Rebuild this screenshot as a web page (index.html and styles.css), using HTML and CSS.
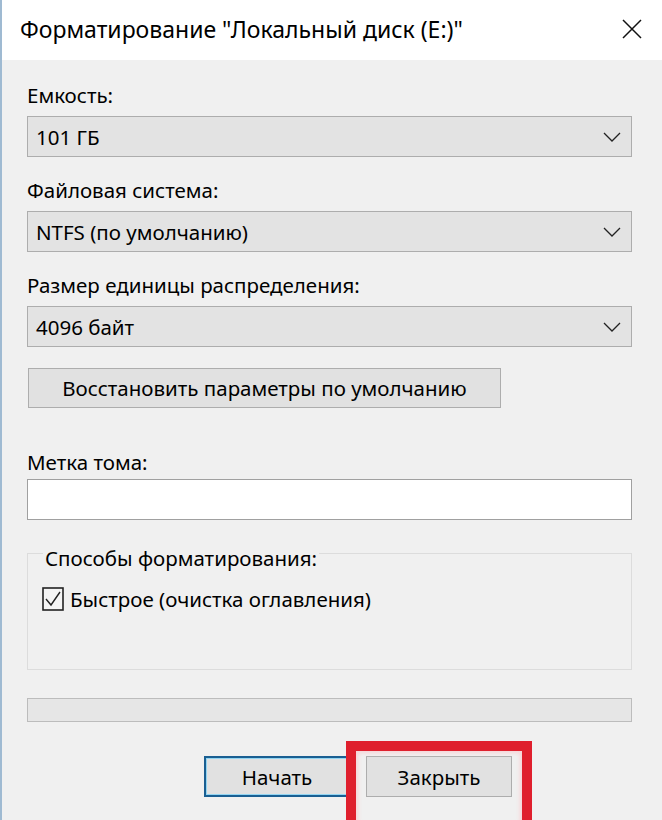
FILE: index.html
```html
<!DOCTYPE html>
<html lang="ru">

<head>
  <meta charset="UTF-8">
  <meta name="viewport" content="width=device-width, initial-scale=1.0">
  <title>Форматирование</title>
  <link rel="stylesheet" href="styles.css">
</head>

<body>
  <div class="window">
    <div class="titlebar">
      <span class="title">Форматирование "Локальный диск (E:)"</span>
      <svg class="close" width="20" height="20" viewBox="0 0 20 20">
        <path d="M1 1 L19 19 M19 1 L1 19" stroke="#111" stroke-width="1.5" fill="none" />
      </svg>
    </div>

    <div class="content">
      <div class="label">Емкость:</div>
      <div class="select">
        <span>101 ГБ</span>
        <svg class="chevron" width="18" height="10" viewBox="0 0 18 10">
          <path d="M1 1 L9 9 L17 1" stroke="#222" stroke-width="1.3" fill="none" />
        </svg>
      </div>

      <div class="label">Файловая система:</div>
      <div class="select">
        <span>NTFS (по умолчанию)</span>
        <svg class="chevron" width="18" height="10" viewBox="0 0 18 10">
          <path d="M1 1 L9 9 L17 1" stroke="#222" stroke-width="1.3" fill="none" />
        </svg>
      </div>

      <div class="label">Размер единицы распределения:</div>
      <div class="select">
        <span>4096 байт</span>
        <svg class="chevron" width="18" height="10" viewBox="0 0 18 10">
          <path d="M1 1 L9 9 L17 1" stroke="#222" stroke-width="1.3" fill="none" />
        </svg>
      </div>

      <div class="button restore">Восстановить параметры по умолчанию</div>

      <div class="label volume-label">Метка тома:</div>
      <div class="textbox"></div>

      <fieldset class="group">
        <legend>Способы форматирования:</legend>
        <div class="check-row">
          <svg class="checkbox" width="22" height="24" viewBox="0 0 22 24">
            <rect x="1" y="1" width="20" height="22" stroke="#222" stroke-width="1.6" fill="#f4f4f4" />
            <path d="M4 12 L9 18 L18 5" stroke="#222" stroke-width="1.4" fill="none" />
          </svg>
          <span>Быстрое (очистка оглавления)</span>
        </div>
      </fieldset>

      <div class="progress"></div>

      <div class="actions">
        <div class="button default">Начать</div>
        <div class="button highlighted">Закрыть</div>
      </div>
    </div>
  </div>
</body>

</html>
```

FILE: styles.css
```css
body {
  margin: 0;
  font-family: "Noto Sans", "Open Sans", sans-serif;
  color: #000;
}

.window {
  width: 662px;
  height: 820px;
  overflow: hidden;
  background: #f0f0f0;
  border-left: 2px solid #9fbad2;
  box-sizing: border-box;
}

.titlebar {
  height: 60px;
  background: #fff;
  display: flex;
  align-items: center;
  justify-content: space-between;
  padding: 0 20px 0 18px;
}

.title {
  font-size: 23px;
  margin-top: -2px;
}

.close {
  margin-top: -2px;
}

.content {
  padding: 23px 30px 0 25px;
  font-size: 20.5px;
}

.label {
  line-height: 24px;
  margin-bottom: 9px;
}

.select {
  height: 39px;
  border: 1px solid #adadad;
  background: #e3e3e3;
  display: flex;
  align-items: center;
  justify-content: space-between;
  padding: 0 10px 0 8px;
  margin-bottom: 21px;
}

.button {
  height: 39px;
  border: 1px solid #adadad;
  background: #e1e1e1;
  display: flex;
  align-items: center;
  justify-content: center;
  box-sizing: border-box;
}

.restore {
  width: 473px;
  height: 40px;
  margin: 8px 0 0 1px;
}

.volume-label {
  margin-top: 42px;
  margin-bottom: 5px;
}

.textbox {
  height: 39px;
  border: 1px solid #a0a0a0;
  background: #fff;
}

.group {
  margin: 18px 0 0;
  padding: 16px 14px 0 14px;
  border: 1px solid #dcdcdc;
  box-sizing: border-box;
  height: 132px;
}

.group legend {
  padding: 9px 2px 0;
  margin-left: 1px;
  line-height: 22px;
}

.check-row {
  display: flex;
  align-items: center;
  gap: 6px;
}

.progress {
  margin-top: 28px;
  height: 24px;
  border: 1px solid #bcbcbc;
  background: #e6e6e6;
  box-sizing: border-box;
}

.actions {
  display: flex;
  gap: 16px;
  margin: 34px 0 0 177px;
}

.actions .button {
  width: 146px;
  height: 41px;
}

.default {
  border: 2px solid #1a5f92;
  box-shadow: inset 0 0 0 1px #93d5f2;
}

.highlighted {
  position: relative;
}

.highlighted::after {
  content: "";
  position: absolute;
  left: -21px;
  right: -21px;
  top: -16px;
  bottom: -40px;
  border: 10px solid #df1f2d;
  box-shadow: inset 0 0 4px 2px #f7d3d6;
}
```
